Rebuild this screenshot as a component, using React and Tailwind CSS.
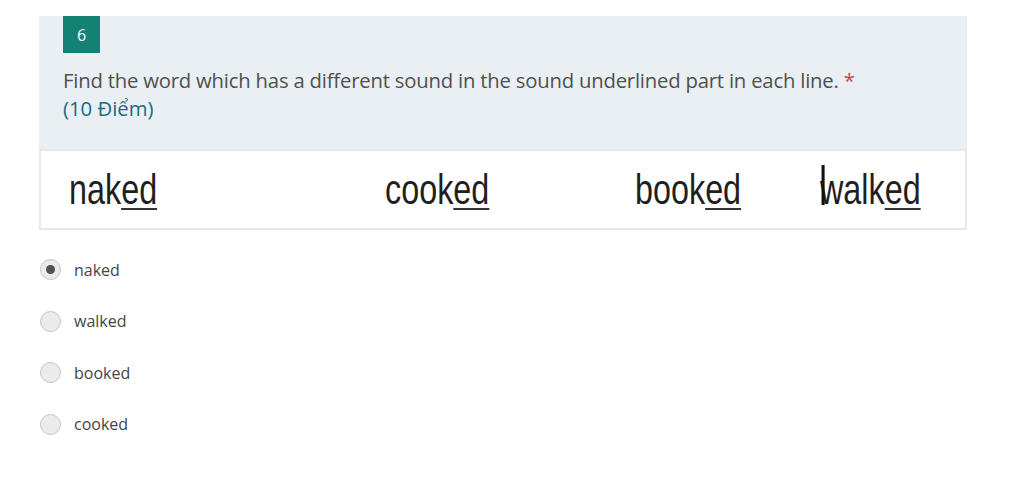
import { useState } from "react";

const options = ["naked", "walked", "booked", "cooked"];

const words = [
  { stem: "nak", key: "naked" },
  { stem: "cook", key: "cooked" },
  { stem: "book", key: "booked" },
  { stem: "walk", key: "walked", cursor: true },
];

function Word({ stem, cursor }) {
  return (
    <span className="relative inline-block origin-left scale-x-[0.77] text-[#1f1f1f] leading-none whitespace-nowrap">
      {cursor && (
        <span className="absolute left-[2px] top-[-4px] w-[4px] h-[40px] bg-[#111]" />
      )}
      {stem}
      <span className="underline decoration-2 underline-offset-[4px] decoration-[#333]">ed</span>
    </span>
  );
}

export default function App() {
  const [picked, setPicked] = useState("naked");

  return (
    <div className="w-[1024px] h-[493px] bg-white font-['Open_Sans',sans-serif]">
      <div className="pt-4 pl-[39px] w-[967px]">
        <div className="bg-[#e9eff2] pl-6 pb-[27px]">
          <div className="w-[37px] h-[37px] bg-[#138275] text-white text-[16px] flex items-center justify-center">
            6
          </div>
          <p className="mt-[13px] text-[20.3px] leading-[28px] text-[#505050] tracking-[-0.2px]">
            Find the word which has a different sound in the sound underlined part in each line.{" "}
            <span className="text-[#b84a4a]">*</span>
          </p>
          <p className="text-[20.3px] leading-[28px] text-[#1d6b86]">(10 Điểm)</p>
        </div>
        <div className="h-[81px] bg-white border-2 border-[#e4eaec] grid grid-cols-[316px_250px_185px_auto] items-center pl-[28px] font-['Liberation_Sans',sans-serif] text-[42px]">
          {words.map((w) => (
            <div key={w.key}>
              <Word stem={w.stem} cursor={w.cursor} />
            </div>
          ))}
        </div>
      </div>
      <div className="mt-[29px] pl-[40px] flex flex-col gap-[30.5px]">
        {options.map((o) => (
          <label key={o} className="flex items-center gap-[13px] cursor-pointer" onClick={() => setPicked(o)}>
            <span className="w-[21px] h-[21px] rounded-full border border-[#c4c4c4] bg-[#ebebeb] flex items-center justify-center">
              {picked === o && <span className="w-[9px] h-[9px] rounded-full bg-[#505050]" />}
            </span>
            <span className="text-[16px] leading-[20px] text-[#454545]">{o}</span>
          </label>
        ))}
      </div>
    </div>
  );
}
